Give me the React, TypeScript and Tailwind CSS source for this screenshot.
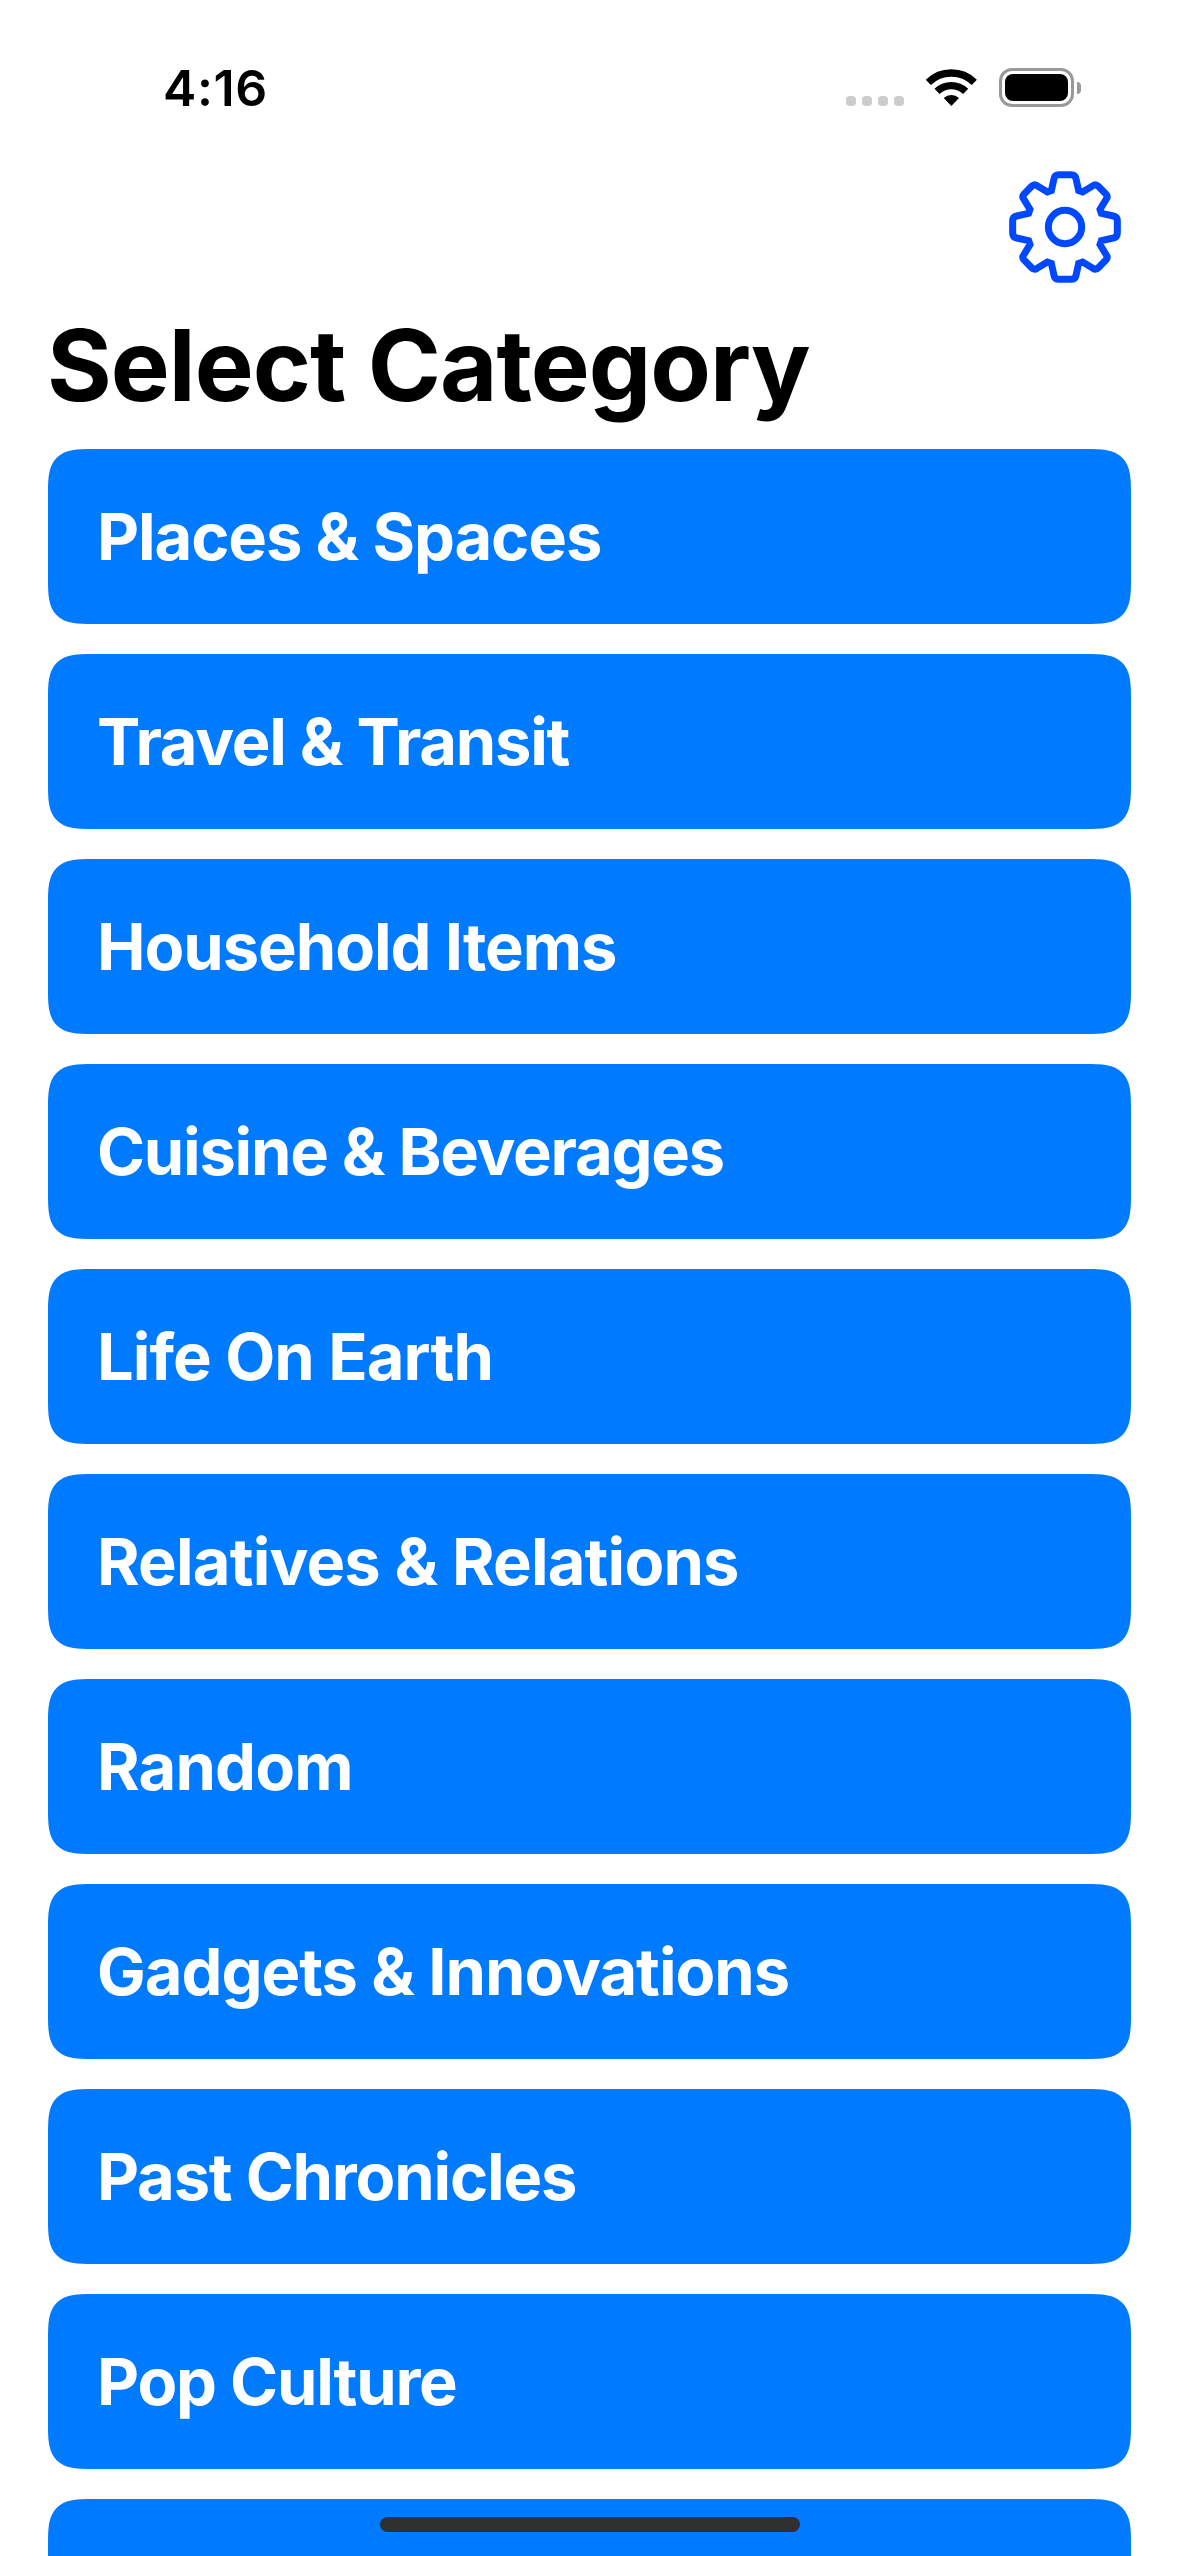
const categories = [
  { name: "Places & Spaces", tracking: "tracking-[-1.09px]" },
  { name: "Travel & Transit", tracking: "tracking-[-1.23px]" },
  { name: "Household Items", tracking: "tracking-[-1.05px]" },
  { name: "Cuisine & Beverages", tracking: "tracking-[-1.24px]" },
  { name: "Life On Earth", tracking: "tracking-[-0.95px]" },
  { name: "Relatives & Relations", tracking: "tracking-[-0.82px]" },
  { name: "Random", tracking: "tracking-[-0.82px]" },
  { name: "Gadgets & Innovations", tracking: "tracking-[-1.02px]" },
  { name: "Past Chronicles", tracking: "tracking-[-1.19px]" },
  { name: "Pop Culture", tracking: "tracking-[-1.2px]" },
];

function WifiIcon() {
  return (
    <svg className="h-[38px] w-[52px]" viewBox="-79 -114 156 114" fill="none" stroke="#000" strokeWidth="22">
      <path d="M-69 -71A99 99 0 0 1 69 -71" />
      <path d="M-43 -44A62 62 0 0 1 43 -44" />
      <path d="M0 0L-23 -24A34 34 0 0 1 23 -24Z" fill="#000" stroke="none" />
    </svg>
  );
}

function GearIcon() {
  return (
    <svg className="h-[114px] w-[114px]" viewBox="-171 -171 342 342" fill="none" stroke="#0048ff" strokeWidth="21">
      <circle r="50" />
      <path d="M-41 -109L-33 -145Q-31 -157 -18 -157L18 -157Q31 -157 33 -145L41 -109L53 -105L84 -124Q92 -130 100 -122L122 -100Q130 -92 124 -84L105 -53L109 -41L145 -33Q157 -31 157 -18L157 18Q157 31 145 33L109 41L105 53L124 84Q130 92 122 100L100 122Q92 130 84 124L53 105L41 109L33 145Q31 157 18 157L-18 157Q-31 157 -33 145L-41 109L-53 105L-84 124Q-92 130 -100 122L-122 100Q-130 92 -124 84L-105 53L-109 41L-145 33Q-157 31 -157 18L-157 -18Q-157 -31 -145 -33L-109 -41L-105 -53L-124 -84Q-130 -92 -122 -100L-100 -122Q-92 -130 -84 -124L-53 -105Z" />
    </svg>
  );
}

function StatusBar() {
  return (
    <header className="flex h-[170px] items-start justify-between pl-[163px] pr-[97px] pt-[68px]">
      <time className="text-[50px] leading-[40px] font-semibold tracking-[0.6px]">4:16</time>
      <div className="flex items-start">
        <div className="mt-7 flex gap-1.5">
          <span className="size-2.5 rounded-[4px] bg-[#cbcbcb]" />
          <span className="size-2.5 rounded-[4px] bg-[#cbcbcb]" />
          <span className="size-2.5 rounded-[4px] bg-[#cbcbcb]" />
          <span className="size-2.5 rounded-[4px] bg-[#cbcbcb]" />
        </div>
        <div className="ml-[21px]">
          <WifiIcon />
        </div>
        <div className="ml-[22px] flex items-center">
          <div className="h-[39px] w-[75px] rounded-[13px] border-[3px] border-[#999] p-[3px]">
            <div className="h-full rounded-[8px] bg-black" />
          </div>
          <div className="ml-[3px] h-3 w-1 rounded-r-full bg-[#999]" />
        </div>
      </div>
    </header>
  );
}

export default function App() {
  return (
    <div className="relative h-[2556px] w-[1178px] overflow-hidden bg-white font-['Inter',sans-serif] text-black">
      <StatusBar />
      <div className="flex h-[132px] justify-end pr-14">
        <button aria-label="Settings" className="h-[114px]">
          <GearIcon />
        </button>
      </div>
      <main className="pl-12 pr-[47px]">
        <h1 className="-ml-px h-[147px] pt-[3px] text-[99px] leading-[120px] font-bold tracking-[-0.98px] whitespace-nowrap">
          <span>Select Category</span>
        </h1>
        <ul className="flex flex-col gap-[30px]">
          {categories.map((c) => (
            <li
              key={c.name}
              className="flex h-[175px] items-center rounded-[30px] bg-[#007aff] pl-[49px] text-[65px] font-bold whitespace-nowrap text-white supports-[corner-shape:squircle]:rounded-[45px] supports-[corner-shape:squircle]:[corner-shape:superellipse(1.68)]"
            >
              <span className={c.tracking}>{c.name}</span>
            </li>
          ))}
          <li className="h-[175px] rounded-[30px] bg-[#007aff] supports-[corner-shape:squircle]:rounded-[45px] supports-[corner-shape:squircle]:[corner-shape:superellipse(1.68)]" />
        </ul>
      </main>
      <div className="absolute top-[2517px] left-[380px] h-[15px] w-[420px] rounded-full bg-[#303030]" />
    </div>
  );
}
